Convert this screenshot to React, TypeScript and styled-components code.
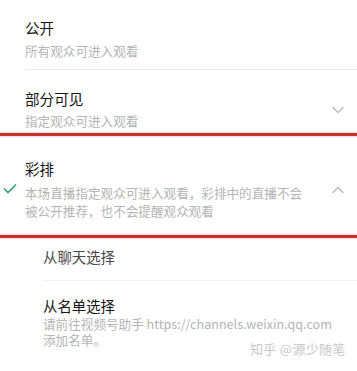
import React from 'react'
import styled, { createGlobalStyle } from 'styled-components'

const GlobalStyle = createGlobalStyle`
  html, body {
    margin: 0;
    padding: 0;
    background: #fff;
  }
  body {
    font-family: "Noto Sans CJK SC", "Noto Sans", sans-serif;
    -webkit-font-smoothing: antialiased;
  }
`

const Sheet = styled.div`
  position: relative;
  width: 357px;
  height: 371px;
  overflow: hidden;
  background: #fff;
`

const Option = styled.div<{ $top: number; $bottom: number }>`
  display: flex;
  align-items: center;
  padding: ${(p) => p.$top}px 12px ${(p) => p.$bottom}px 25px;
  position: relative;
`

const OptionText = styled.div`
  flex: 1;
  display: flex;
  flex-direction: column;
`

const Title = styled.div`
  font-size: 14.6px;
  line-height: 20px;
  color: #151515;
`

const Desc = styled.div<{ $gap?: number }>`
  margin-top: ${(p) => p.$gap ?? 4}px;
  max-width: 284px;
  font-size: 12.6px;
  line-height: 18px;
  color: #b4b4b4;
`

const Divider = styled.div<{ $inset: number }>`
  height: 1px;
  margin-left: ${(p) => p.$inset}px;
  background: #efefef;
`

const RedRule = styled.div`
  height: 3px;
  background: #c8312f;
  box-shadow: 0 0 2px 1px rgba(235, 120, 120, 0.35);
`

const Check = styled.svg`
  position: absolute;
  left: 3px;
  top: 50%;
  margin-top: -3px;
`

const Chevron = styled.svg`
  flex: none;
  margin-left: 4px;
`

const SubItem = styled.div<{ $top: number; $bottom: number }>`
  padding: ${(p) => p.$top}px 12px ${(p) => p.$bottom}px 43px;
`

const SubTitle = styled.div<{ $muted?: boolean }>`
  font-size: 14.4px;
  line-height: 20px;
  color: ${(p) => (p.$muted ? '#4a4a4a' : '#151515')};
`

const SubDesc = styled.div`
  font-size: 12.6px;
  line-height: 16px;
  color: #b4b4b4;
  &:first-of-type {
    margin-top: 2px;
  }
`

const Watermark = styled.div`
  position: absolute;
  left: 250px;
  top: 341px;
  font-size: 13px;
  line-height: 16px;
  color: #c8c8c8;
  letter-spacing: 0.3px;
`

const ChevronIcon = ({ up }: { up?: boolean }) => (
  <Chevron width="14" height="8" viewBox="0 0 14 8">
    <path
      d={up ? 'M1.5 7 L7 1.5 L12.5 7' : 'M1.5 1 L7 6.5 L12.5 1'}
      fill="none"
      stroke="#b9b9b9"
      strokeWidth="1.3"
    />
  </Chevron>
)

const App = () => (
  <Sheet>
    <GlobalStyle />
    <Option $top={18} $bottom={9}>
      <OptionText>
        <Title>公开</Title>
        <Desc>所有观众可进入观看</Desc>
      </OptionText>
    </Option>
    <Divider $inset={25} />
    <Option $top={19} $bottom={3}>
      <OptionText>
        <Title>部分可见</Title>
        <Desc $gap={3}>指定观众可进入观看</Desc>
      </OptionText>
      <ChevronIcon />
    </Option>
    <RedRule />
    <Option $top={23} $bottom={15}>
      <Check width="14" height="11" viewBox="0 0 14 11">
        <path d="M1 5.5 L5 9.5 L13 1.5" fill="none" stroke="#2fa56d" strokeWidth="1.6" />
      </Check>
      <OptionText>
        <Title>彩排</Title>
        <Desc $gap={5}>本场直播指定观众可进入观看，彩排中的直播不会被公开推荐，也不会提醒观众观看</Desc>
      </OptionText>
      <ChevronIcon up />
    </Option>
    <RedRule />
    <SubItem $top={9} $bottom={13}>
      <SubTitle $muted>从聊天选择</SubTitle>
    </SubItem>
    <Divider $inset={43} />
    <SubItem $top={15} $bottom={10}>
      <SubTitle>从名单选择</SubTitle>
      <SubDesc>请前往视频号助手 https://channels.weixin.qq.com</SubDesc>
      <SubDesc>添加名单。</SubDesc>
    </SubItem>
    <Watermark>知乎 @源少随笔</Watermark>
  </Sheet>
)

export default App
